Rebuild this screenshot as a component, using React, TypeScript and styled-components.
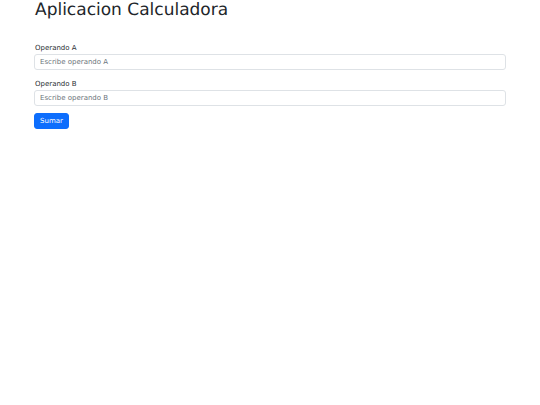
import React, { useState } from "react";
import styled, { createGlobalStyle } from "styled-components";

const GlobalStyle = createGlobalStyle`
  html, body {
    margin: 0;
    padding: 0;
    background: #ffffff;
    font-family: "DejaVu Sans", sans-serif;
    color: #212529;
    text-rendering: geometricPrecision;
  }
`;

const Container = styled.main`
  width: 472px;
  margin: 0 0 0 34px;
`;

const Title = styled.h1`
  font-size: 17px;
  font-weight: 400;
  line-height: 20px;
  margin: 0 0 23px 1px;
`;

const Field = styled.div`
  margin-bottom: 9px;

  &:last-of-type {
    margin-bottom: 7px;
  }
`;

const Label = styled.label`
  display: block;
  font-size: 7px;
  line-height: 10px;
  color: #2b2f33;
  margin: 0 0 1px 1px;
`;

const Input = styled.input`
  display: block;
  box-sizing: border-box;
  width: 100%;
  height: 16px;
  padding: 0 5px;
  font-family: "DejaVu Sans", sans-serif;
  font-size: 7px;
  color: #212529;
  background: #ffffff;
  border: 1px solid #dee2e6;
  border-radius: 3px;
  outline: none;

  &::placeholder {
    color: #6c757d;
  }
`;

const Button = styled.button`
  display: block;
  box-sizing: border-box;
  height: 16px;
  padding: 0 5px;
  font-family: "DejaVu Sans", sans-serif;
  font-size: 7px;
  color: #ffffff;
  background: #0d6efd;
  border: 1px solid #0d6efd;
  border-radius: 3px;
  cursor: pointer;
`;

export default function App() {
  const [a, setA] = useState("");
  const [b, setB] = useState("");

  return (
    <>
      <GlobalStyle />
      <Container>
        <Title>Aplicacion Calculadora</Title>
        <Field>
          <Label htmlFor="a">Operando A</Label>
          <Input
            id="a"
            placeholder="Escribe operando A"
            value={a}
            onChange={(e) => setA(e.target.value)}
          />
        </Field>
        <Field>
          <Label htmlFor="b">Operando B</Label>
          <Input
            id="b"
            placeholder="Escribe operando B"
            value={b}
            onChange={(e) => setB(e.target.value)}
          />
        </Field>
        <Button type="button">Sumar</Button>
      </Container>
    </>
  );
}
